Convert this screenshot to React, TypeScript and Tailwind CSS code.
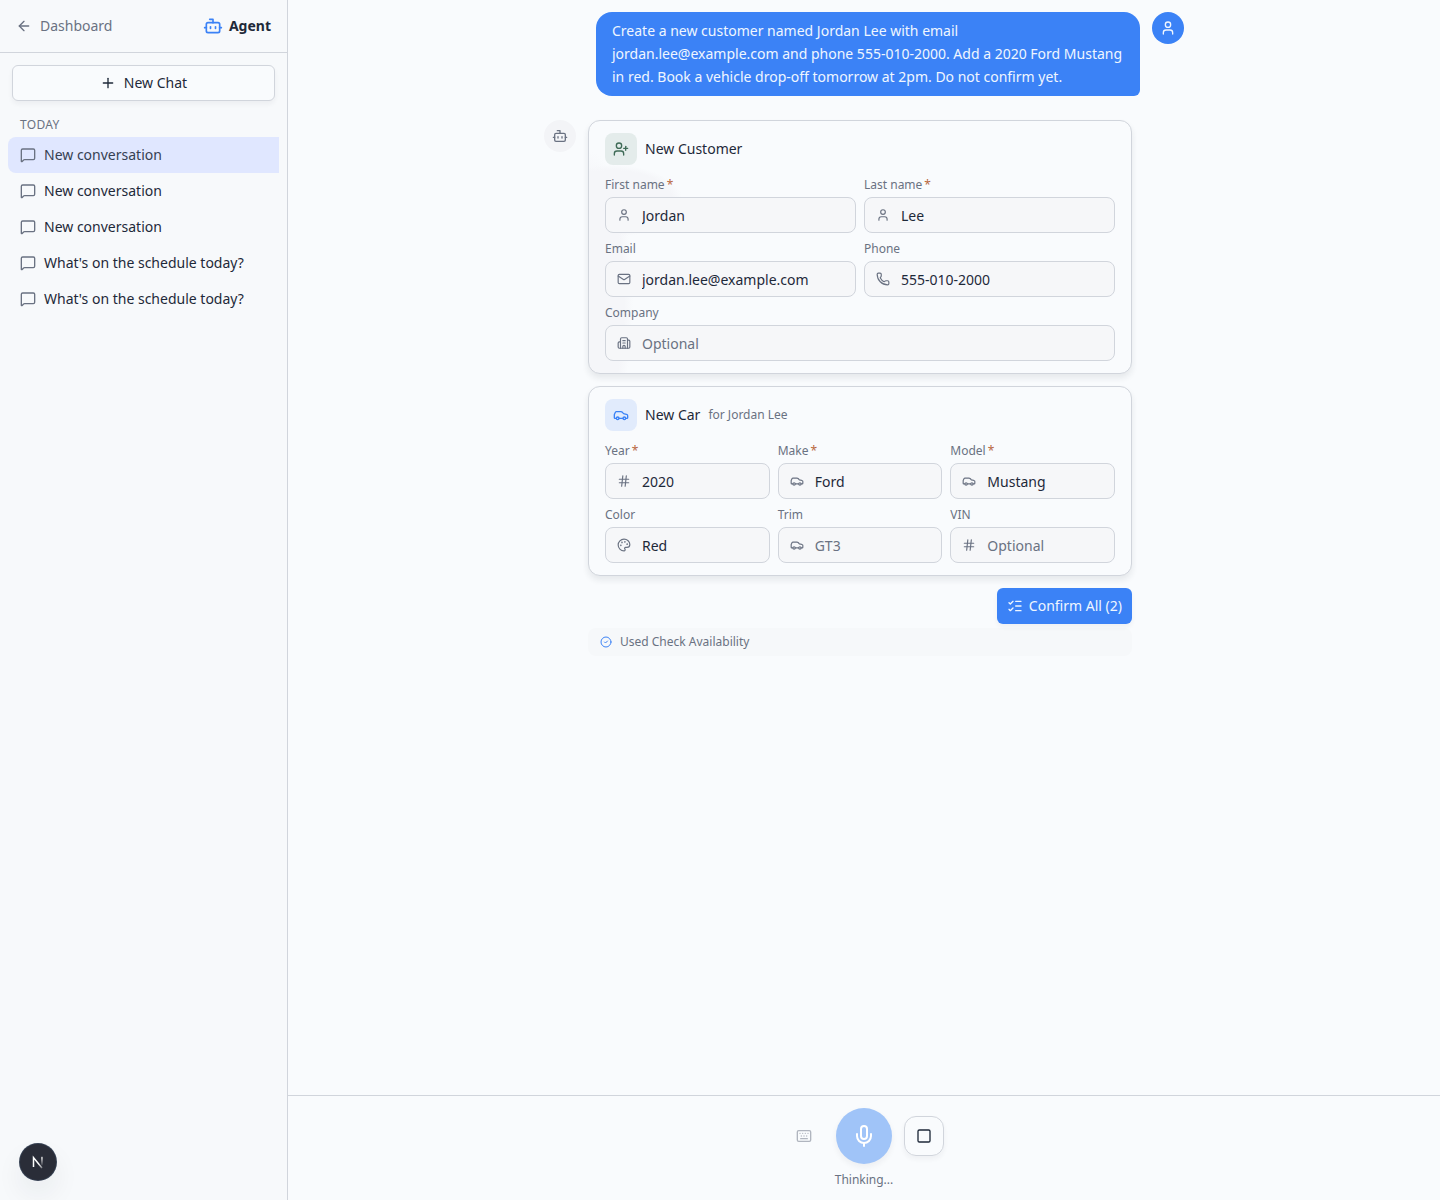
import React, { useState } from "react";
import {
  ArrowLeft,
  Bot,
  Building2,
  Car,
  CircleCheck,
  Hash,
  Keyboard,
  ListChecks,
  Mail,
  MessageSquare,
  Mic,
  Palette,
  Phone,
  Plus,
  Square,
  User,
  UserPlus,
  type LucideIcon,
} from "lucide-react";

type Field = {
  name: string;
  label: string;
  icon: LucideIcon;
  value: string;
  placeholder?: string;
  required?: boolean;
  wide?: boolean;
};

const conversations = [
  { id: 1, title: "New conversation" },
  { id: 2, title: "New conversation" },
  { id: 3, title: "New conversation" },
  { id: 4, title: "What's on the schedule today?" },
  { id: 5, title: "What's on the schedule today?" },
];

const customerFields: Field[] = [
  { name: "firstName", label: "First name", icon: User, value: "Jordan", required: true },
  { name: "lastName", label: "Last name", icon: User, value: "Lee", required: true },
  { name: "email", label: "Email", icon: Mail, value: "jordan.lee@example.com" },
  { name: "phone", label: "Phone", icon: Phone, value: "555-010-2000" },
  { name: "company", label: "Company", icon: Building2, value: "", placeholder: "Optional", wide: true },
];

const carFields: Field[] = [
  { name: "year", label: "Year", icon: Hash, value: "2020", required: true },
  { name: "make", label: "Make", icon: Car, value: "Ford", required: true },
  { name: "model", label: "Model", icon: Car, value: "Mustang", required: true },
  { name: "color", label: "Color", icon: Palette, value: "Red" },
  { name: "trim", label: "Trim", icon: Car, value: "", placeholder: "GT3" },
  { name: "vin", label: "VIN", icon: Hash, value: "", placeholder: "Optional" },
];

const FormField = ({ field }: { field: Field }) => {
  const [value, setValue] = useState(field.value);
  const Icon = field.icon;

  return (
    <label className={field.wide ? "col-span-2 block" : "block min-w-0"}>
      <span className="mb-1 flex gap-0.5 text-xs text-gray-500">
        {field.label}
        {field.required && <span className="text-[#b8683f]">*</span>}
      </span>
      <span className="flex h-9 items-center rounded-lg border border-gray-300 bg-[#f6f7f9] px-[11px]">
        <Icon className="size-3.5 shrink-0 text-gray-500" />
        <input
          className="ml-[11px] mt-0.5 w-full min-w-0 bg-transparent text-sm text-gray-800 outline-none placeholder:text-gray-500"
          value={value}
          placeholder={field.placeholder}
          onChange={(e) => setValue(e.target.value)}
        />
      </span>
    </label>
  );
};

const Sidebar = () => {
  const [activeId, setActiveId] = useState(1);

  return (
    <aside className="flex w-72 shrink-0 flex-col border-r border-gray-300 bg-[#f7f9fb]">
      <div className="flex h-[53px] items-center justify-between border-b border-gray-300 px-4">
        <a className="flex items-center gap-2 text-sm text-gray-500">
          <ArrowLeft className="size-4" />
          Dashboard
        </a>
        <div className="flex items-center gap-1.5 text-sm font-bold text-gray-800">
          <Bot className="size-5 text-[#3b82f6]" />
          Agent
        </div>
      </div>

      <div className="p-3">
        <button className="flex h-9 w-full items-center justify-center gap-2 rounded-md border border-gray-300 bg-[#f9fbfd] text-sm text-gray-800 shadow-[0_3px_5px_rgba(30,41,59,0.05)]">
          <Plus className="size-4" />
          New Chat
        </button>
      </div>

      <div className="px-2">
        <p className="px-3 pb-1 pt-1 text-xs uppercase tracking-wide text-gray-500">Today</p>
        {conversations.map((c) => (
          <button
            key={c.id}
            onClick={() => setActiveId(c.id)}
            className={`flex h-9 w-full items-center gap-2 px-3 text-left text-sm ${
              c.id === activeId ? "rounded-l-lg bg-indigo-100 text-gray-700" : "text-gray-800"
            }`}
          >
            <MessageSquare className="size-4 shrink-0 text-gray-500" />
            {c.title}
          </button>
        ))}
      </div>
    </aside>
  );
};

const App: React.FC = () => {
  return (
    <div className="relative flex h-screen overflow-hidden bg-[#f9fbfd] font-['Noto_Sans',sans-serif] text-gray-800">
      <Sidebar />

      <main className="flex min-w-0 flex-1 flex-col">
        {/* Messages */}
        <div className="flex-1 overflow-hidden">
          <div className="mx-auto flex w-[640px] flex-col gap-6 pt-3">
            <div className="flex items-start justify-end gap-3">
              <p className="w-[544px] rounded-2xl rounded-br-md bg-[#3b82f6] px-4 py-2 text-sm leading-relaxed text-blue-50">
                Create a new customer named Jordan Lee with email jordan.lee@example.com and phone 555-010-2000. Add a
                2020 Ford Mustang in red. Book a vehicle drop-off tomorrow at 2pm. Do not confirm yet.
              </p>
              <div className="flex size-8 items-center justify-center rounded-full bg-[#3b82f6] text-blue-50">
                <User className="size-4" />
              </div>
            </div>

            <div className="flex items-start gap-3">
              <div className="flex size-8 items-center justify-center rounded-full bg-[#f3f4f7] text-gray-500">
                <Bot className="size-4" />
              </div>

              <div className="w-[544px]">
                <div className="space-y-3">
                  <section className="rounded-xl border border-gray-300 bg-[#f9fbfd] bg-[radial-gradient(ellipse_70px_36px_at_24px_80px,#f5f6f9_85%,transparent_100%),radial-gradient(ellipse_44px_150px_at_0px_180px,#f5f6f9_80%,transparent_100%)] px-4 py-3 shadow-[0_4px_6px_rgba(30,41,59,0.09)]">
                    <div className="mb-3 flex items-center gap-2">
                      <div className="flex size-8 items-center justify-center rounded-lg bg-[#e4eceb] text-[#3f6b57]">
                        <UserPlus className="size-4" />
                      </div>
                      <h2 className="text-sm">New Customer</h2>
                    </div>
                    <div className="grid grid-cols-2 gap-2">
                      {customerFields.map((f) => (
                        <FormField key={f.name} field={f} />
                      ))}
                    </div>
                  </section>

                  <section className="rounded-xl border border-gray-300 bg-[#f9fbfd] px-4 py-3 shadow-[0_4px_6px_rgba(30,41,59,0.09)]">
                    <div className="mb-3 flex items-center gap-2">
                      <div className="flex size-8 items-center justify-center rounded-lg bg-[#e1ebfc] text-[#3b82f6]">
                        <Car className="size-4" />
                      </div>
                      <h2 className="text-sm">New Car</h2>
                      <span className="text-xs text-gray-500">for Jordan Lee</span>
                    </div>
                    <div className="grid grid-cols-3 gap-2">
                      {carFields.map((f) => (
                        <FormField key={f.name} field={f} />
                      ))}
                    </div>
                  </section>

                  <div className="flex justify-end">
                    <button className="flex h-9 items-center gap-1.5 rounded-md bg-[#3b82f6] px-2.5 text-sm text-blue-50 shadow-[0_3px_5px_rgba(30,41,59,0.05)]">
                      <ListChecks className="size-4" />
                      Confirm All (2)
                    </button>
                  </div>
                </div>

                <div className="mt-1 flex h-7 items-center gap-2 rounded-lg bg-[#f6f8fa] px-3 text-xs text-gray-500">
                  <CircleCheck className="size-3 text-[#3b82f6]" />
                  Used Check Availability
                </div>
              </div>
            </div>
          </div>
        </div>

        {/* Voice controls */}
        <div className="flex flex-col items-center gap-2 border-t border-gray-300 py-3">
          <div className="flex items-center gap-3">
            <button className="flex size-10 items-center justify-center text-gray-500 opacity-50">
              <Keyboard className="size-4" />
            </button>
            <button className="flex size-14 items-center justify-center rounded-full bg-[#a0c4f8] text-white shadow-[0_3px_6px_rgba(30,41,59,0.06)]">
              <Mic className="size-6" />
            </button>
            <button className="flex size-10 items-center justify-center rounded-xl border border-gray-300 shadow-[0_3px_5px_rgba(30,41,59,0.05)]">
              <Square className="size-4" />
            </button>
          </div>
          <p className="text-xs text-gray-500">Thinking...</p>
        </div>
      </main>

      {/* Dev tools badge */}
      <div className="absolute bottom-5 left-5 flex size-9 items-center justify-center rounded-full bg-[#2a2d38] shadow-[0_14px_28px_rgba(30,41,59,0.07)] ring-1 ring-gray-700">
        <svg width="14" height="14" viewBox="0 0 14 14" fill="none" strokeWidth="1.5">
          <defs>
            <linearGradient id="stem" x1="0" y1="0" x2="0" y2="1">
              <stop offset="0.2" stopColor="#fff" stopOpacity="0.8" />
              <stop offset="1" stopColor="#fff" stopOpacity="0.1" />
            </linearGradient>
            <linearGradient id="diagonal" x1="0" y1="0" x2="1" y2="1">
              <stop offset="0.6" stopColor="#fff" />
              <stop offset="1" stopColor="#fff" stopOpacity="0.4" />
            </linearGradient>
          </defs>
          <path d="M2.5 12V2.5L11 13" stroke="url(#diagonal)" />
          <rect x="10.2" y="1.8" width="1.5" height="8.5" fill="url(#stem)" />
        </svg>
      </div>
    </div>
  );
};

export default App;
